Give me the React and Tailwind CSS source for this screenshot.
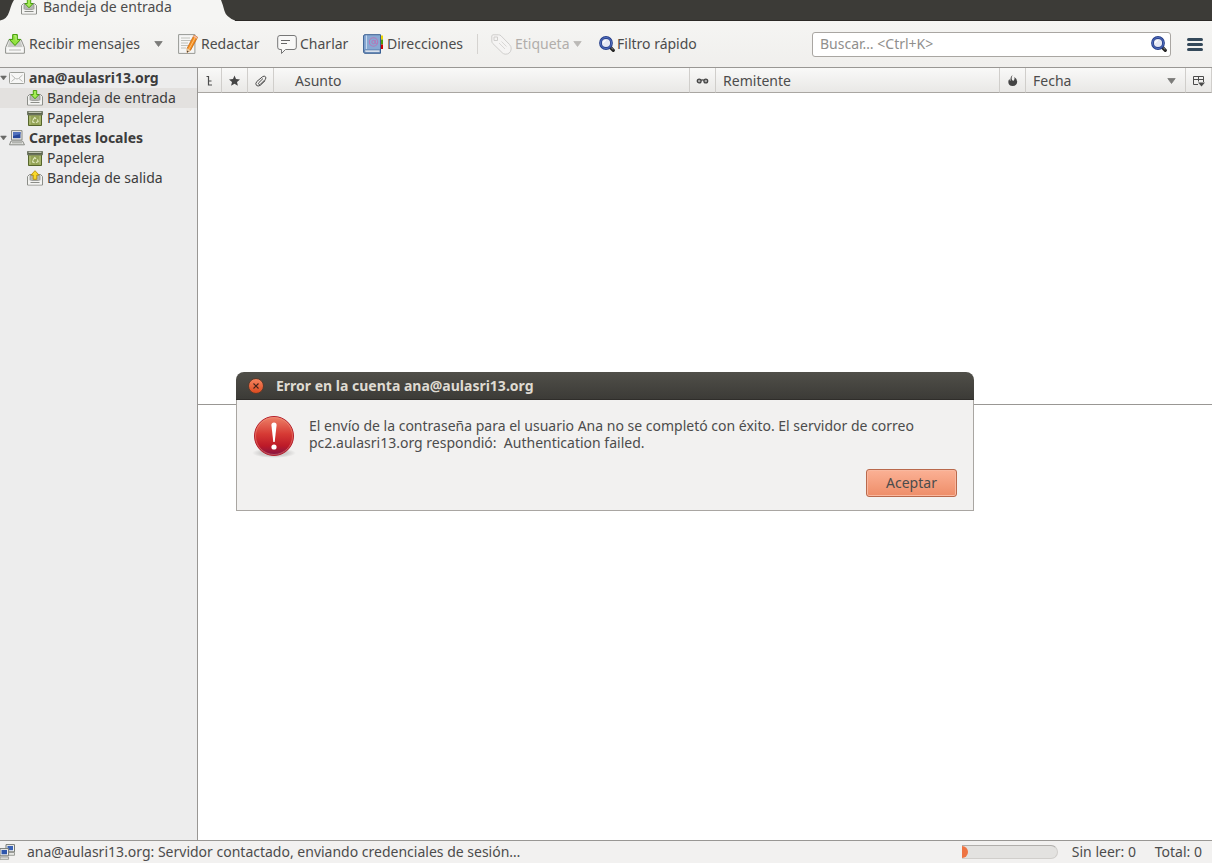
import { useState } from 'react';

function InboxIcon({ out = false }) {
  return (
    <svg viewBox="0 0 16 16" className="w-4 h-4 shrink-0" aria-hidden="true">
      <path d="M2.500 4.500h11l2 2v8.500H.5V6.500z" fill="#f1f1ef" stroke="#8b8d88" strokeLinejoin="round" />
      <path d="M3 5.500h10v5H3z" fill="#b4b6b1" stroke="#8b8d88" strokeWidth=".7" />
      <path d="M1.200 10.500h3l1 1.500h5.600l1-1.500h3v4H1.200z" fill="#f4f4f2" />
      <path d="M3.500 12.500h9" stroke="#8b8d88" />
      {out ? (
        <path d="M8 .7 12 5H9.800v4.300H6.200V5H4z" fill="#f8d92a" stroke="#b98f05" strokeWidth=".9" strokeLinejoin="round" />
      ) : (
        <path d="M6.300.5h3.400v4H12L8 8.800 4 4.500h2.300z" fill="#a5ec56" stroke="#3f9a05" strokeWidth=".9" strokeLinejoin="round" />
      )}
    </svg>
  );
}

function ReceiveIcon() {
  return (
    <svg viewBox="0 0 20 20" className="w-5 h-5 shrink-0" aria-hidden="true">
      <path d="M4 5.500h12l3.400 8v5.700H.6v-5.700z" fill="#ececea" stroke="#8d8f8a" strokeLinejoin="round" />
      <path d="M4.800 6.500h10.400l2.300 6.500h-15z" fill="#c8c9c5" />
      <path d="M1.500 13.500h17v4.900h-17z" fill="#f7f7f6" />
      <path d="M4 16h12" stroke="#b5b6b2" />
      <path d="M7.700.6h4.600v4.800h3.400L10 11.500 4.300 5.400h3.400z" fill="#93e33f" stroke="#3f9a05" strokeLinejoin="round" />
      <path d="M8.900 1.800h2.200v4.600" fill="none" stroke="#cdf7a0" strokeWidth=".8" />
    </svg>
  );
}

function WriteIcon() {
  return (
    <svg viewBox="0 0 20 20" className="w-5 h-5 shrink-0" aria-hidden="true">
      <path d="M.6.6h16.300v18.800H.6z" fill="#f6f6f5" stroke="#979994" />
      <path d="M3 4h9M3 6.500h10M3 9h7M3 11.500h7M3 14h5" stroke="#b9bbb6" strokeWidth=".9" />
      <path d="m16 1.200 3.600 2-7 13-3.500 2.200.1-4.200z" fill="#f78f1e" stroke="#b75a06" strokeWidth=".7" />
      <path d="m17.500 3-6.500 12" stroke="#fcc07a" />
      <path d="m9.200 14.200 3.400 2-3.500 2.200z" fill="#e8cfa8" />
      <path d="m9.100 16.500 1.500.9-1.500 1z" fill="#333" />
      <path d="m16 1.200 3.600 2-.9 1.600-3.500-2z" fill="#f3b9a4" />
    </svg>
  );
}

function ChatIcon() {
  return (
    <svg viewBox="0 0 20 20" className="w-5 h-5 shrink-0" aria-hidden="true">
      <path
        d="M3 1.500h14a2.300 2.300 0 0 1 2.300 2.300v9.400a2.300 2.300 0 0 1-2.300 2.300H8.500L4.500 19.500v-4H3a2.300 2.300 0 0 1-2.300-2.300V3.800A2.300 2.300 0 0 1 3 1.500z"
        fill="#f8f8f7"
        stroke="#777"
      />
      <path d="M4 6.500h9M4 9.500h6" stroke="#666" />
    </svg>
  );
}

function AddressBookIcon() {
  return (
    <svg viewBox="0 0 20 20" className="w-5 h-5 shrink-0" aria-hidden="true">
      <path d="M16 1.500h4v4h-4z" fill="#eed500" />
      <path d="M16 5.500h4v5h-4z" fill="#4e9a06" />
      <path d="M16 10.500h4V15h-4z" fill="#cc0000" />
      <path d="M2 .7h15.500v18.600H2A1.500 1.500 0 0 1 .6 18V2A1.400 1.400 0 0 1 2 .7z" fill="#87a8d3" stroke="#3a5f92" />
      <path d="M3.500 1.500v13.500" stroke="#c7d8ee" />
      <path d="M1.500 16h15.500v2.300H2z" fill="#f0f4fa" stroke="#456b9e" strokeWidth=".7" />
      <circle cx="10.500" cy="8" r="4.200" fill="none" stroke="#b478b8" strokeWidth="1.100" />
      <circle cx="10.500" cy="8" r="1.700" fill="none" stroke="#b478b8" />
      <path d="M12.300 6v3.200q.8 1.200 2 .2" fill="none" stroke="#b478b8" />
    </svg>
  );
}

function TagIcon() {
  return (
    <svg viewBox="0 0 21 21" className="w-[21px] h-[21px] shrink-0" aria-hidden="true">
      <path
        d="M2 .8h5.500q1.500 0 2.500 1l8.500 8.700q2 2.200 1.700 4.500-.2 2.600-2 4-1.500 1.300-4 1.200-1.700-.2-3-1.500L1.800 9.500Q.8 8.500.8 7V2q.2-1 1.200-1.200z"
        fill="#f5f4f3"
        stroke="#cfcecc"
      />
      <path d="M3 3h3.500v3.500H3z" fill="none" stroke="#cfcecc" />
      <path d="m8 9 6 6M10.500 7.500l5 5" stroke="#d9d8d6" />
    </svg>
  );
}

function MagnifierIcon() {
  return (
    <svg viewBox="0 0 16 16" className="w-4 h-4 shrink-0" aria-hidden="true">
      <path d="m11.500 11.500 2.800 2.800" stroke="#222" strokeWidth="3.200" strokeLinecap="round" />
      <path d="m12.500 12 1.500 1.300" stroke="#999" strokeLinecap="round" />
      <circle cx="7" cy="7" r="5.500" fill="#e6e8f3" stroke="#27408b" strokeWidth="2.800" />
      <circle cx="7" cy="7" r="5.500" fill="none" stroke="#5571c2" />
      <path d="M4.500 7A2.500 2.500 0 0 1 7 4.500" fill="none" stroke="#fff" strokeWidth="1.200" />
    </svg>
  );
}

function MailIcon() {
  return (
    <svg viewBox="0 0 16 16" className="w-4 h-4 shrink-0" aria-hidden="true">
      <rect x=".5" y="2.500" width="15" height="11" rx=".8" fill="#f7f7f6" stroke="#9c9e99" />
      <path d="m2.500 5 4 3.500q1.500 1 3 0l4-3.500M2.500 11.500 6 8.500M13.500 11.500 10 8.500" fill="none" stroke="#b9bab7" />
    </svg>
  );
}

function TrashIcon() {
  return (
    <svg viewBox="0 0 16 16" className="w-4 h-4 shrink-0" aria-hidden="true">
      <path d="M1.500 4.500h13v11h-13z" fill="#94a357" stroke="#55652a" />
      <path d="M.5 1.500h15v3.300H.5z" fill="#5b634c" stroke="#6f7765" />
      <path d="M1.500 2.300h13" stroke="#d9dccf" />
      <path d="M3 6v8.500M13 6v8.500" stroke="#b9c583" />
      <path d="m6 9.800 1.800-2.300 1.300 1.300M10.500 9.500l.6 2.200-2.200.8M7.600 12.700l-2-.8.4-1.600" fill="none" stroke="#e4ebc4" strokeWidth="1.100" />
    </svg>
  );
}

function ComputerIcon() {
  return (
    <svg viewBox="0 0 16 16" className="w-4 h-4 shrink-0" aria-hidden="true">
      <path d="M2.500.6h10.500V10H2.500z" fill="#ecece9" stroke="#888a85" />
      <path d="M4 2h7.500v6.200H4z" fill="#26479b" />
      <path d="M4 2h7.500v2L4 6z" fill="#5272bd" />
      <path d="M2 11h11.500l2 3.800H.5z" fill="#e7e7e4" stroke="#888a85" strokeLinejoin="round" />
      <path d="M3 12.800h10" stroke="#9c9e99" />
    </svg>
  );
}

function NetworkIcon() {
  return (
    <svg viewBox="0 0 16 16" className="w-4 h-4 shrink-0" aria-hidden="true">
      <path d="M6 .6h8.500v7.200H6z" fill="#f1f1ef" stroke="#777a74" />
      <path d="M7.500 2h5.500v4.200H7.500z" fill="#3b63b5" />
      <path d="M8.500 8.500h6v2.800h-6z" fill="#e7e7e4" stroke="#888a85" strokeWidth=".8" />
      <path d="M0 4.600h8.600v7.200H0z" fill="#f1f1ef" stroke="#777a74" />
      <path d="M1.500 6H7v4.300H1.500z" fill="#2f57ab" />
      <path d="M0 13h8.600v2.300H0z" fill="#e7e7e4" stroke="#888a85" strokeWidth=".8" />
    </svg>
  );
}

function ErrorIcon() {
  return (
    <svg viewBox="0 0 44 44" className="w-11 h-11 shrink-0" aria-hidden="true">
      <defs>
        <linearGradient id="err" x1="0" y1="0" x2="0" y2="1">
          <stop offset="0" stopColor="#ee8268" />
          <stop offset=".45" stopColor="#d63a34" />
          <stop offset=".75" stopColor="#bd1a28" />
          <stop offset="1" stopColor="#821445" />
        </linearGradient>
        <radialGradient id="errShadow">
          <stop offset=".6" stopColor="#000" stopOpacity=".14" />
          <stop offset="1" stopColor="#000" stopOpacity="0" />
        </radialGradient>
      </defs>
      <ellipse cx="22" cy="38" rx="22" ry="5" fill="url(#errShadow)" />
      <circle cx="22" cy="21" r="19.500" fill="url(#err)" stroke="#b5202c" />
      <circle cx="22" cy="21" r="18.500" fill="none" stroke="#f2a08c" strokeOpacity=".45" />
      <path d="M19.400 10q0-2.500 2.600-2.500t2.600 2.500L22.700 27h-1.400z" fill="#fff" />
      <circle cx="22" cy="32" r="2.600" fill="#fff" />
    </svg>
  );
}

function Arrow({ className = 'w-[9px] h-[6px] text-[#7b7b79]' }) {
  return (
    <svg viewBox="0 0 9 6" className={`shrink-0 ${className}`} aria-hidden="true">
      <path d="M.8.5h7.400L4.500 5.500z" fill="currentColor" stroke="currentColor" strokeWidth=".8" />
    </svg>
  );
}

const columnIcons = {
  thread: <path d="M3.500 2.500h2v8.500H9M5.500 7h3" fill="none" stroke="#4c4c4c" strokeWidth="1.200" />,
  star: <path d="m6.500 1.500 1.500 3.600 4 .3-3 2.600.9 3.800-3.400-2-3.400 2L4 8 1 5.400l4-.3z" fill="#444" />,
  clip: (
    <path
      d="M9 4.500 4.800 8.700q-.7 1 0 1.600t1.600 0l5-5q1-1.500 0-2.600t-2.700-.1L2.800 7.500q-1.800 2.300-.4 3.800t3.900 0l5-4.800"
      fill="none"
      stroke="#4c4c4c"
    />
  ),
  read: (
    <g fill="#aaa" stroke="#444" strokeWidth="1.300">
      <circle cx="3.200" cy="7" r="1.900" />
      <circle cx="9.800" cy="7" r="1.900" />
      <path d="M5 6.300q1.500-.8 3 0" fill="none" />
    </g>
  ),
  junk: <path d="M6.500 1Q5 4 6 6q1 1.500 2 .3Q9 4.800 8.300 3q2.900 1.800 2.900 4.700-.2 4.100-4.500 4.300Q2.500 11.800 2.300 8q0-2 1.200-3Q3.500 6.500 4.500 7 4 3 6.500 1z" fill="#444" />,
  picker: (
    <g fill="none" stroke="#4c4c4c">
      <path d="M6 10.500H1.500v-8h10V8M1.500 5.500h10M6.500 2.500v5" />
      <path d="M6 8.500h7L9.500 12.500z" fill="#4c4c4c" stroke="none" />
    </g>
  ),
};

const columns = [
  { id: 'thread', title: 'Conversación', width: 'w-6' },
  { id: 'star', title: 'Destacado', width: 'w-[26px]' },
  { id: 'clip', title: 'Adjuntos', width: 'w-[26px]' },
  { id: 'subject', label: 'Asunto', width: '', pad: 'pl-[21px]' },
  { id: 'read', title: 'Leído', width: 'w-[26px]' },
  { id: 'from', label: 'Remitente', width: 'w-[28%]', pad: 'pl-[7px]' },
  { id: 'junk', title: 'Basura', width: 'w-[26px]' },
  { id: 'date', label: 'Fecha', width: 'w-40', pad: 'pl-[7px]', sorted: true },
  { id: 'picker', title: 'Columnas', width: 'w-[26px]' },
];

const accounts = [
  {
    name: 'ana@aulasri13.org',
    icon: <MailIcon />,
    folders: [
      { id: 'inbox', name: 'Bandeja de entrada', icon: <InboxIcon /> },
      { id: 'trash', name: 'Papelera', icon: <TrashIcon /> },
    ],
  },
  {
    name: 'Carpetas locales',
    icon: <ComputerIcon />,
    folders: [
      { id: 'local-trash', name: 'Papelera', icon: <TrashIcon /> },
      { id: 'outbox', name: 'Bandeja de salida', icon: <InboxIcon out /> },
    ],
  },
];

function TabStrip() {
  return (
    <div className="flex h-[21px] shrink-0 bg-[#3c3b37]">
      <svg viewBox="0 0 14 21" className="w-3.5 h-[21px] shrink-0" aria-hidden="true">
        <path d="M0 20.500Q7 19.500 9.500 11T14 0V21H0z" fill="#f5f5f3" />
      </svg>
      <div className="w-[207px] bg-[#f5f5f3]">
        <button className="flex h-3.5 items-center gap-1.5 pl-[7px] leading-[14px] whitespace-nowrap">
          <InboxIcon />
          Bandeja de entrada
        </button>
      </div>
      <svg viewBox="0 0 14 21" className="w-3.5 h-[21px] shrink-0" aria-hidden="true">
        <path d="M0 0Q2 5 3.500 11T14 20.500V21H0z" fill="#f5f5f3" />
      </svg>
      <div className="flex-1 border-b border-[#2b2926]" />
    </div>
  );
}

function Toolbar() {
  return (
    <div className="flex h-[47px] shrink-0 items-center border-b border-[#999794] bg-linear-to-b from-[#f5f5f3] to-[#f0efed] pl-[5px] pr-[9px] whitespace-nowrap">
      <button className="flex w-[146px] items-center gap-1">
        <ReceiveIcon />
        Recibir mensajes
      </button>
      <button className="flex w-[27px] items-center pl-[3px]" aria-label="Recibir de una cuenta">
        <Arrow />
      </button>
      <button className="flex w-[99px] items-center gap-[3px]">
        <WriteIcon />
        Redactar
      </button>
      <button className="flex w-[86px] items-center gap-[3px]">
        <ChatIcon />
        Charlar
      </button>
      <button className="flex w-[114px] items-center gap-1">
        <AddressBookIcon />
        Direcciones
      </button>
      <div className="mr-[13px] h-5 w-px bg-[#d5d3d0]" />
      <button disabled className="flex w-[108px] items-center gap-[3px] text-[#b1aeab]">
        <TagIcon />
        Etiqueta
        <Arrow className="w-[9px] h-[6px] text-[#bbb9b6]" />
      </button>
      <button className="flex items-center gap-0.5">
        <MagnifierIcon />
        Filtro rápido
      </button>
      <div className="ml-auto flex h-[25px] w-[359px] items-center rounded-[3px] border border-[#a9a6a2] bg-white pl-[7px] pr-[3px]">
        <input
          type="search"
          aria-label="Buscar"
          placeholder="Buscar… <Ctrl+K>"
          className="min-w-0 flex-1 bg-transparent outline-none placeholder:text-[#908f8d]"
        />
        <button aria-label="Buscar">
          <MagnifierIcon />
        </button>
      </div>
      <button aria-label="Menú" className="ml-4 flex flex-col gap-[2px]">
        <span className="h-[3px] w-4 rounded-sm bg-[#34495a]" />
        <span className="h-[3px] w-4 rounded-sm bg-[#34495a]" />
        <span className="h-[3px] w-4 rounded-sm bg-[#34495a]" />
      </button>
    </div>
  );
}

function FolderPane() {
  const [selected, setSelected] = useState('inbox');

  return (
    <nav className="w-[198px] shrink-0 border-r border-[#999794] bg-[#ededed] text-[#3c3c3c] whitespace-nowrap">
      {accounts.map((account) => (
        <section key={account.name}>
          <button className="flex h-5 w-full items-center font-bold">
            <Arrow className="w-[7px] h-[6px] text-[#6b6b69]" />
            <span className="flex items-center gap-1 pl-0.5">
              {account.icon}
              {account.name}
            </span>
          </button>
          {account.folders.map((folder) => (
            <button
              key={folder.id}
              onClick={() => setSelected(folder.id)}
              className={`flex h-5 w-full items-center gap-1 pl-[27px] ${selected === folder.id ? 'bg-[#e3e1df]' : ''}`}
            >
              {folder.icon}
              {folder.name}
            </button>
          ))}
        </section>
      ))}
    </nav>
  );
}

function ThreadPane() {
  return (
    <div className="h-[337px] border-b border-[#999794]">
      <table className="w-full table-fixed border-separate border-spacing-0">
        <thead>
          <tr>
            {columns.map((col) => (
              <th
                key={col.id}
                title={col.title}
                className={`h-[25px] border-b border-r border-b-[#a9a6a2] border-r-[#d0cecb] bg-linear-to-b from-[#f9f9f8] to-[#e9e8e6] p-0 text-left font-normal ${col.width}`}
              >
                {col.label ? (
                  <div className={`flex items-center justify-between pt-px pr-[9px] ${col.pad}`}>
                    {col.label}
                    {col.sorted && <Arrow />}
                  </div>
                ) : (
                  <svg viewBox="0 0 13 13" className="mx-auto w-[13px] h-[13px]" aria-hidden="true">
                    {columnIcons[col.id]}
                  </svg>
                )}
              </th>
            ))}
          </tr>
        </thead>
      </table>
    </div>
  );
}

function ErrorDialog({ onClose }) {
  return (
    <div className="absolute inset-0 flex items-center justify-center pt-5 pr-0.5">
      <div role="alertdialog" aria-labelledby="dlg-title" className="w-[738px]">
        <div className="flex h-7 items-center gap-3 rounded-t-lg border-b border-[#2f2d2a] bg-linear-to-b from-[#504f49] to-[#3c3b37] pl-3 text-[#dfdbd2]">
          <button
            onClick={onClose}
            aria-label="Cerrar"
            className="flex h-4 w-4 items-center justify-center rounded-full border border-[#5a3b2c] bg-linear-to-b from-[#f5835d] to-[#dc4a1d]"
          >
            <svg viewBox="0 0 8 8" className="w-2 h-2" aria-hidden="true">
              <path d="m1.500 1.500 5 5m0-5-5 5" stroke="#40221a" strokeWidth="1.100" />
            </svg>
          </button>
          <h2 id="dlg-title" className="font-bold">
            Error en la cuenta ana@aulasri13.org
          </h2>
        </div>
        <div className="border border-t-0 border-[#a9a6a2] bg-[#f2f1f0] pt-[15px] pr-4 pb-[13px] pl-[15px]">
          <div className="flex gap-[13px]">
            <ErrorIcon />
            <p className="pt-0.5 leading-[17px] whitespace-nowrap">
              El envío de la contraseña para el usuario Ana no se completó con éxito. El servidor de correo
              <br />
              pc2.aulasri13.org respondió:&nbsp; Authentication failed.
            </p>
          </div>
          <div className="flex justify-end pt-2.5">
            <button
              onClick={onClose}
              className="h-7 w-[91px] rounded-[3px] border border-[#b9694c] bg-linear-to-b from-[#fbb195] to-[#ee8d68] shadow-[inset_0_0_0_1px_#f9b89f]"
            >
              Aceptar
            </button>
          </div>
        </div>
      </div>
    </div>
  );
}

function StatusBar() {
  return (
    <footer className="flex h-[23px] shrink-0 items-center border-t border-[#999794] bg-[#f2f1f0] pr-2.5 whitespace-nowrap">
      <NetworkIcon />
      <span className="flex-1 pl-[11px]">ana@aulasri13.org: Servidor contactado, enviando credenciales de sesión…</span>
      <div
        role="progressbar"
        aria-label="Progreso"
        className="mr-3.5 h-3.5 w-24 rounded-r-full border border-l-0 border-[#d0cecb] border-t-[#b0aeab] bg-[#e3e2e0]"
      >
        <div className="h-full w-1.5 rounded-r-full bg-[#ee7443]" />
      </div>
      <span className="w-[83px]">Sin leer: 0</span>
      <span>Total: 0</span>
    </footer>
  );
}

export default function App() {
  const [showError, setShowError] = useState(true);

  return (
    <div className="relative flex min-h-screen flex-col bg-white font-['Noto_Sans',sans-serif] text-[14px] leading-5 text-[#4c4c4c]">
      <TabStrip />
      <Toolbar />
      <div className="flex flex-1">
        <FolderPane />
        <main className="min-w-0 flex-1">
          <ThreadPane />
        </main>
      </div>
      <StatusBar />
      {showError && <ErrorDialog onClose={() => setShowError(false)} />}
    </div>
  );
}
